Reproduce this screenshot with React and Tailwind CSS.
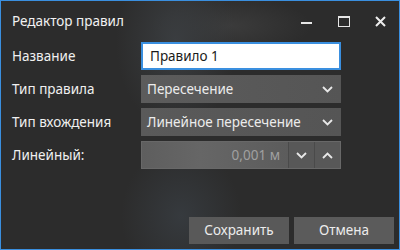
import React from "react";

const Chevron = ({ up = false, className = "" }) => (
  <svg width="11" height="7" viewBox="0 0 11 7" className={className}>
    <path
      d={up ? "M1 6 L5.5 1.5 L10 6" : "M1 1 L5.5 5.5 L10 1"}
      fill="none"
      stroke="#e8e8e8"
      strokeWidth="1.8"
    />
  </svg>
);

export default function App() {
  return (
    <div className="w-[400px] h-[250px] border border-[#3a8fdf] bg-[#2c2c2c] bg-[radial-gradient(ellipse_60px_90px_at_175px_40px,#3a3d40,transparent),radial-gradient(ellipse_80px_30px_at_230px_25px,#3b3b3b,transparent),radial-gradient(ellipse_60px_70px_at_180px_215px,#363a3e,transparent)] flex flex-col text-white font-['Segoe_UI','Noto_Sans',sans-serif] overflow-hidden">
      <div className="h-[41px] flex items-center pl-[11px] shrink-0">
        <div className="text-[13.5px] text-[#f2f2f2] flex-1">Редактор правил</div>
        <div className="flex items-center">
          <div className="w-[37px] h-[40px] flex items-center justify-center">
            <div className="w-[11px] h-[2px] bg-[#e6e6e6] mt-[2px]" />
          </div>
          <div className="w-[37px] h-[40px] flex items-center justify-center">
            <div className="w-[12px] h-[11px] border border-[#e6e6e6] border-t-2" />
          </div>
          <div className="w-[37px] h-[40px] flex items-center justify-center">
            <svg width="11" height="11" viewBox="0 0 11 11">
              <path d="M1 1 L10 10 M10 1 L1 10" stroke="#ededed" strokeWidth="2" />
            </svg>
          </div>
        </div>
      </div>
      <div className="pl-[11px] grid grid-cols-[129px_200px] gap-y-[5px] items-center text-[13.5px]">
        <div className="text-[#f0f0f0]">Название</div>
        <div className="h-[28px] bg-white border-2 border-[#3a8fdf] flex items-center pl-[7px] text-[#1a1a1a]">
          Правило 1
        </div>

        <div className="text-[#f0f0f0]">Тип правила</div>
        <div className="h-[28px] bg-[#575757] bg-[linear-gradient(90deg,#5c5c5c,#555555)] flex items-center pl-[6px] pr-[8px] text-[#ececec]">
          <span className="flex-1">Пересечение</span>
          <Chevron />
        </div>

        <div className="text-[#f0f0f0]">Тип вхождения</div>
        <div className="h-[28px] bg-[#575757] bg-[linear-gradient(90deg,#5a5a5a,#555555)] flex items-center pl-[6px] pr-[8px] text-[#ececec]">
          <span className="flex-1">Линейное пересечение</span>
          <Chevron />
        </div>

        <div className="text-[#f0f0f0]">Линейный:</div>
        <div className="h-[28px] border border-[#686868] flex bg-[#5a5a5a]">
          <div className="flex-1 flex items-center justify-end pr-[8px] text-[#a0a0a0] bg-[linear-gradient(90deg,#5e5e5e,#666666_40%,#5c5c5c)]">
            0,001 м
          </div>
          <div className="w-[26px] border-l border-[#4a4a4a] bg-[#585858] flex items-center justify-center">
            <Chevron />
          </div>
          <div className="w-[26px] border-l border-[#4a4a4a] bg-[#585858] flex items-center justify-center">
            <Chevron up />
          </div>
        </div>
      </div>
      <div className="mt-auto flex justify-end gap-[5px] pr-[5px] pb-[5px]">
        <div className="w-[100px] h-[27px] bg-[#595959] flex items-center justify-center text-[13.5px] text-[#ececec]">
          Сохранить
        </div>
        <div className="w-[100px] h-[27px] bg-[#5b5b5b] flex items-center justify-center text-[13.5px] text-[#ececec]">
          Отмена
        </div>
      </div>
    </div>
  );
}
